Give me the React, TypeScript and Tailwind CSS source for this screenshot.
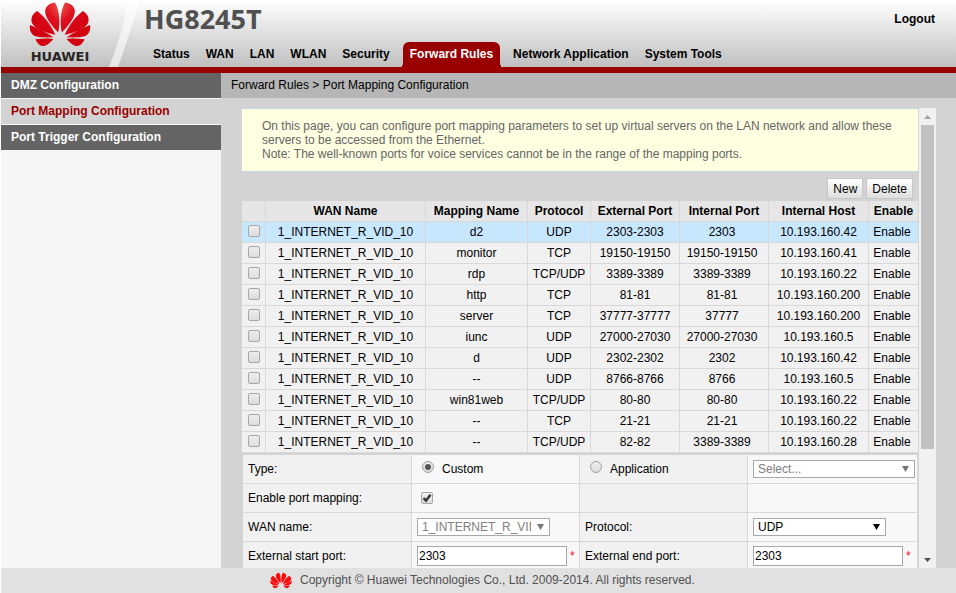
import React, { useState } from 'react';

interface Mapping {
  wan: string;
  name: string;
  protocol: string;
  external: string;
  internal: string;
  host: string;
}

const WAN = '1_INTERNET_R_VID_10';

const mappings: Mapping[] = [
  { wan: WAN, name: 'd2', protocol: 'UDP', external: '2303-2303', internal: '2303', host: '10.193.160.42' },
  { wan: WAN, name: 'monitor', protocol: 'TCP', external: '19150-19150', internal: '19150-19150', host: '10.193.160.41' },
  { wan: WAN, name: 'rdp', protocol: 'TCP/UDP', external: '3389-3389', internal: '3389-3389', host: '10.193.160.22' },
  { wan: WAN, name: 'http', protocol: 'TCP', external: '81-81', internal: '81-81', host: '10.193.160.200' },
  { wan: WAN, name: 'server', protocol: 'TCP', external: '37777-37777', internal: '37777', host: '10.193.160.200' },
  { wan: WAN, name: 'iunc', protocol: 'UDP', external: '27000-27030', internal: '27000-27030', host: '10.193.160.5' },
  { wan: WAN, name: 'd', protocol: 'UDP', external: '2302-2302', internal: '2302', host: '10.193.160.42' },
  { wan: WAN, name: '--', protocol: 'UDP', external: '8766-8766', internal: '8766', host: '10.193.160.5' },
  { wan: WAN, name: 'win81web', protocol: 'TCP/UDP', external: '80-80', internal: '80-80', host: '10.193.160.22' },
  { wan: WAN, name: '--', protocol: 'TCP', external: '21-21', internal: '21-21', host: '10.193.160.22' },
  { wan: WAN, name: '--', protocol: 'TCP/UDP', external: '82-82', internal: '3389-3389', host: '10.193.160.28' },
];

const navItems = ['Status', 'WAN', 'LAN', 'WLAN', 'Security', 'Forward Rules', 'Network Application', 'System Tools'];
const sideItems = ['DMZ Configuration', 'Port Mapping Configuration', 'Port Trigger Configuration'];
const columns = ['WAN Name', 'Mapping Name', 'Protocol', 'External Port', 'Internal Port', 'Internal Host', 'Enable'];

// Half of the flower, mirrored to get the other four petals
const Petals: React.FC = () => (
  <>
    <path d="M28.200 31.500C30 23 30 10 25 1.500C19.500 2.200 15 5.500 15.200 11C15.500 17.500 23 26 28.200 31.500Z" />
    <path d="M25.300 33.800C21.500 25 15 16 7.200 10C2.800 12.500 0.500 16.500 1.800 21.500C4 27.500 16 32 25.300 33.800Z" />
    <path d="M23.500 36.300C16 31.500 8 27 0 24C-0.800 29 1 33.500 5.500 35.300C10 36.700 18 36.500 23.500 36.300Z" />
    <path d="M23.500 38C17.500 37.300 11.500 37.500 5.500 38.300C7.500 43 11 46 15 44.800C18.500 43.300 21 40.500 23.500 38Z" />
  </>
);

const Flower: React.FC<{ className: string; color: string; shaded?: boolean }> = ({ className, color, shaded }) => (
  <svg className={className} viewBox="-1 0 62 47" fill={shaded ? 'url(#petal)' : color} aria-hidden="true">
    {shaded && (
      <defs>
        <radialGradient id="petal" gradientUnits="userSpaceOnUse" cx="34" cy="3" r="36">
          <stop offset="0" stopColor="#f0705c" />
          <stop offset="0.5" stopColor="#e01020" />
          <stop offset="1" stopColor="#d2000f" />
        </radialGradient>
      </defs>
    )}
    <Petals />
    <g transform="translate(60 0) scale(-1 1)">
      <Petals />
    </g>
  </svg>
);

const Check: React.FC<{ label: string; defaultChecked?: boolean }> = ({ label, defaultChecked }) => (
  <span className="relative inline-block size-3 align-middle">
    <input
      type="checkbox"
      aria-label={label}
      defaultChecked={defaultChecked}
      className="peer block size-3 appearance-none rounded-xs border border-[#a6a6a6] bg-linear-to-b from-[#eeeeee] to-[#dcdcdc]"
    />
    <svg className="pointer-events-none absolute inset-0 hidden size-3 peer-checked:block" viewBox="0 0 12 12" fill="none" stroke="#333" strokeWidth="2.400">
      <path d="M2.500 6.200L5 8.700L9.500 2.800" />
    </svg>
  </span>
);

const Radio: React.FC<{ id: string; defaultChecked?: boolean }> = ({ id, defaultChecked }) => (
  <span className="relative mb-1 inline-block size-3">
    <input
      id={id}
      type="radio"
      name="type"
      defaultChecked={defaultChecked}
      className="peer block size-3 appearance-none rounded-full border border-[#a0a0a0] bg-linear-to-b from-[#eeeeee] to-[#dcdcdc]"
    />
    <span className="pointer-events-none absolute inset-[3px] hidden rounded-full bg-[#555] peer-checked:block" />
  </span>
);

const Select: React.FC<{ id: string; value: string; width: string; disabled?: boolean }> = ({ id, value, width, disabled }) => (
  <div className={`relative ${width}`}>
    <select
      id={id}
      aria-label={id}
      disabled={disabled}
      className="block h-[18px] w-full appearance-none border border-[#a9a9a9] bg-white pr-[18px] pl-1 leading-4 text-black disabled:text-[#808080] disabled:opacity-100"
    >
      <option>{value}</option>
    </select>
    <svg
      className={`pointer-events-none absolute top-[6px] right-[6px] h-[6px] w-[7px] ${disabled ? 'fill-[#777]' : 'fill-black'}`}
      viewBox="0 0 7 6"
    >
      <path d="M0 0H7L3.500 6Z" />
    </svg>
  </div>
);

const PortInput: React.FC<{ id: string }> = ({ id }) => (
  <div className="flex items-center gap-[3px]">
    <input id={id} type="text" defaultValue="2303" className="h-5 w-[150px] shrink-0 border border-[#a9a9a9] bg-white px-px" />
    <span className="text-[#ff0033]">*</span>
  </div>
);

const labelCell = 'h-[29px] border-r border-b border-[#d8d8d8] bg-[#f1f1f1] px-[5px]';
const fieldCell = 'h-[29px] border-r border-b border-[#d8d8d8] bg-[#f8f8f8] px-[5px]';

const MappingForm: React.FC = () => (
  <form className="mt-[2px] pl-px">
    <table className="w-full table-fixed border-separate border-spacing-0">
      <colgroup>
        <col className="w-[169px]" />
        <col className="w-[168px]" />
        <col className="w-[168px]" />
        <col className="w-[170px]" />
      </colgroup>
      <tbody>
        <tr>
          <td className={labelCell}>Type:</td>
          <td className={fieldCell}>
            <div className="flex items-center gap-2 pl-[5px]">
              <Radio id="custom" defaultChecked />
              <label htmlFor="custom">Custom</label>
            </div>
          </td>
          <td className={labelCell}>
            <div className="flex items-center gap-2 pl-[5px]">
              <Radio id="application" />
              <label htmlFor="application">Application</label>
            </div>
          </td>
          <td className={fieldCell}>
            <Select id="application-list" value="Select..." width="w-[162px]" disabled />
          </td>
        </tr>
        <tr>
          <td className={labelCell}>Enable port mapping:</td>
          <td className={fieldCell}>
            <div className="flex pb-px pl-1">
              <Check label="Enable port mapping" defaultChecked />
            </div>
          </td>
          <td className={labelCell}></td>
          <td className={fieldCell}></td>
        </tr>
        <tr>
          <td className={labelCell}>
            <label htmlFor="wan">WAN name:</label>
          </td>
          <td className={fieldCell}>
            <Select id="wan" value={WAN} width="w-[133px]" disabled />
          </td>
          <td className={labelCell}>
            <label htmlFor="protocol">Protocol:</label>
          </td>
          <td className={fieldCell}>
            <Select id="protocol" value="UDP" width="w-[133px]" />
          </td>
        </tr>
        <tr>
          <td className={labelCell}>
            <label htmlFor="start">External start port:</label>
          </td>
          <td className={fieldCell}>
            <PortInput id="start" />
          </td>
          <td className={labelCell}>
            <label htmlFor="end">External end port:</label>
          </td>
          <td className={fieldCell}>
            <PortInput id="end" />
          </td>
        </tr>
      </tbody>
    </table>
  </form>
);

const MappingTable: React.FC = () => {
  const [selected, setSelected] = useState(0);

  return (
    <table className="w-full table-fixed border-separate border-spacing-0 text-center">
      <colgroup>
        <col className="w-[24px]" />
        <col className="w-[160px]" />
        <col className="w-[102px]" />
        <col className="w-[63px]" />
        <col className="w-[89px]" />
        <col className="w-[89px]" />
        <col className="w-[100px]" />
        <col className="w-[49px]" />
      </colgroup>
      <thead>
        <tr className="bg-[#e6e6e6]">
          <th className="h-[21px] border-r border-b border-[#d8d8d8]"></th>
          {columns.map((column) => (
            <th key={column} className="border-r border-b border-[#d8d8d8] whitespace-nowrap last:border-r-0">
              {column}
            </th>
          ))}
        </tr>
      </thead>
      <tbody>
        {mappings.map((row, index) => (
          <tr
            key={index}
            onClick={() => setSelected(index)}
            className={`cursor-pointer ${index === selected ? 'bg-[#c7e7ff]' : 'bg-[#f1f1f1]'}`}
          >
            <td className="h-[21px] border-r border-b border-[#d8d8d8] pb-[2px] leading-none">
              <Check label={`Select ${row.name}`} />
            </td>
            <td className="border-r border-b border-[#d8d8d8]">{row.wan}</td>
            <td className="border-r border-b border-[#d8d8d8]">{row.name}</td>
            <td className="border-r border-b border-[#d8d8d8]">{row.protocol}</td>
            <td className="border-r border-b border-[#d8d8d8]">{row.external}</td>
            <td className="border-r border-b border-[#d8d8d8] pr-1">{row.internal}</td>
            <td className="border-r border-b border-[#d8d8d8]">{row.host}</td>
            <td className="border-b border-[#d8d8d8] pr-[3px]">Enable</td>
          </tr>
        ))}
      </tbody>
    </table>
  );
};

const ScrollBar: React.FC = () => (
  <div className="flex w-[17px] shrink-0 flex-col items-center bg-[#f1f1f1]">
    <button type="button" aria-label="Scroll up" className="flex h-[17px] w-full shrink-0 items-center justify-center">
      <svg className="h-1 w-[7px] fill-[#a3a3a3]" viewBox="0 0 7 4">
        <path d="M3.500 0L7 4H0Z" />
      </svg>
    </button>
    <div className="flex w-[13px] flex-1 flex-col">
      <div className="h-[76%] bg-[#c1c1c1]" />
    </div>
    <button type="button" aria-label="Scroll down" className="flex h-[17px] w-full shrink-0 items-center justify-center">
      <svg className="h-1 w-[7px] fill-[#505050]" viewBox="0 0 7 4">
        <path d="M0 0H7L3.500 4Z" />
      </svg>
    </button>
  </div>
);

const Header: React.FC = () => (
  <header className="flex h-[73px] shrink-0 border-b-6 border-[#990000] bg-linear-to-b from-white to-[#c0c0c0]">
    <div className="flex w-[105px] shrink-0 flex-col items-center pt-px pl-3">
      <Flower className="h-[47px] w-[62px]" color="#e00012" shaded />
      <svg className="h-[18px] w-[66px] shrink-0" viewBox="0 0 66 18" role="img" aria-label="HUAWEI">
        <text x="33" y="13" textAnchor="middle" fontFamily="'DejaVu Sans', sans-serif" fontSize="13" fontWeight="700" fill="#2b2625">
          HUAWEI
        </text>
      </svg>
    </div>
    <svg className="h-[67px] w-[34px] shrink-0" viewBox="0 0 34 67" aria-hidden="true">
      <path d="M22 0H34C27 22 20 45 12 67H3C10 48 18 28 22 0Z" fill="#fff" fillOpacity="0.6" />
    </svg>
    <div className="flex flex-1 flex-col justify-between">
      <div className="flex h-[38px] items-center justify-between pr-[21px] pl-1">
        <h1 className="font-['Open_Sans',sans-serif] text-[27px] font-bold text-[#505050]">HG8245T</h1>
        <a href="#logout" className="font-bold">
          Logout
        </a>
      </div>
      <nav className="flex pl-[5px] font-bold">
        {navItems.map((item) =>
          item === 'Forward Rules' ? (
            <a
              key={item}
              href="#forward-rules"
              className="relative mx-[5px] flex h-[25px] items-center rounded-t-md bg-[#990000] px-[7px] pb-[2px] whitespace-nowrap text-white before:absolute before:bottom-0 before:-left-px before:h-[2px] before:w-px before:bg-[#990000] after:absolute after:-right-px after:bottom-0 after:h-[2px] after:w-px after:bg-[#990000]"
            >
              {item}
            </a>
          ) : (
            <a key={item} href="#nav" className="flex h-[25px] items-center px-2 pb-[2px] whitespace-nowrap">
              {item}
            </a>
          )
        )}
      </nav>
    </div>
  </header>
);

const App: React.FC = () => (
  <div className="flex h-screen flex-col overflow-hidden bg-white pl-px font-['Liberation_Sans',Arial,sans-serif] text-[12px] leading-[14px] text-black">
    <Header />

    <div className="flex min-h-0 flex-1">
      {/* Side menu */}
      <aside className="flex w-[220px] shrink-0 flex-col gap-px bg-[#f6f6f6] font-bold">
        {sideItems.map((item) => (
          <a
            key={item}
            href="#menu"
            className={`flex h-[25px] items-center px-[10px] pb-[2px] ${
              item === 'Port Mapping Configuration' ? 'bg-[#d3d3d3] text-[#990000]' : 'bg-[#646464] text-white'
            }`}
          >
            {item}
          </a>
        ))}
      </aside>

      {/* Content */}
      <main className="flex min-w-0 flex-1 flex-col bg-[#d3d3d3]">
        <div className="flex h-[25px] shrink-0 items-center bg-[#b6b6b6] px-[10px] pb-[2px]">
          Forward Rules &gt; Port Mapping Configuration
        </div>
        <div className="flex min-h-0 flex-1 pt-[10px] pr-5 pl-[21px]">
          <div className="mr-px min-w-0 flex-1 overflow-hidden">
            <p className="border-y border-[#c5d9e8] bg-[#ffffe1] px-5 py-[10px] text-[#666]">
              On this page, you can configure port mapping parameters to set up virtual servers on the LAN network and allow these
              servers to be accessed from the Ethernet.
              <br />
              Note: The well-known ports for voice services cannot be in the range of the mapping ports.
            </p>
            <div className="flex justify-end gap-[3px] pt-[6px] pr-[5px] pb-[2px]">
              {['New', 'Delete'].map((action) => (
                <button
                  key={action}
                  type="button"
                  className="h-[21px] border border-[#c6c6c6] bg-linear-to-b from-white to-[#dedede] px-[5px]"
                >
                  {action}
                </button>
              ))}
            </div>
            <MappingTable />
            <MappingForm />
          </div>
          <ScrollBar />
        </div>
      </main>
    </div>

    <footer className="flex h-[25px] shrink-0 items-center gap-2 bg-[#e1e1e1] pb-px pl-[269px] text-[#505050]">
      <Flower className="h-[17px] w-[22px]" color="#fa0a0a" />
      <span>Copyright © Huawei Technologies Co., Ltd. 2009-2014. All rights reserved.</span>
    </footer>
  </div>
);

export default App;
